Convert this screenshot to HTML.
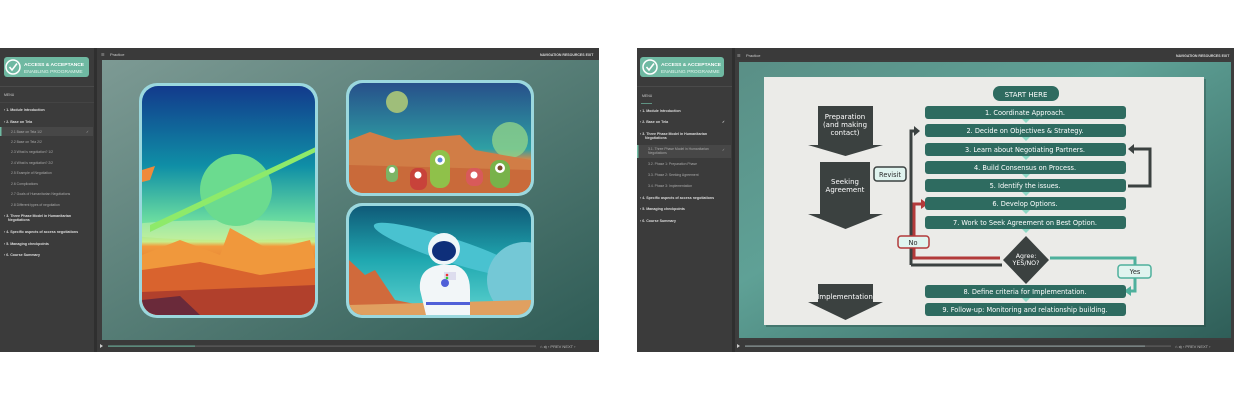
<!DOCTYPE html>
<html><head><meta charset="utf-8"><style>
html,body{margin:0;padding:0;background:#fff;width:1234px;height:400px;overflow:hidden}
svg{display:block}
text{font-family:"Liberation Sans",sans-serif}
.dj{font-family:"DejaVu Sans",sans-serif}
</style></head><body>
<svg width="1234" height="400" viewBox="0 0 1234 400" xmlns="http://www.w3.org/2000/svg">
<defs>
<linearGradient id="lbg" x1="0" y1="0" x2="1" y2="1"><stop offset="0" stop-color="#7d9a94"/><stop offset="0.5" stop-color="#557c75"/><stop offset="1" stop-color="#2f5c56"/></linearGradient>
<linearGradient id="rbg" x1="0" y1="0" x2="1" y2="1"><stop offset="0" stop-color="#5a8f86"/><stop offset="0.4" stop-color="#5fa196"/><stop offset="1" stop-color="#2f5e58"/></linearGradient>
<linearGradient id="sky1" x1="0" y1="0" x2="0" y2="1"><stop offset="0" stop-color="#123a8c"/><stop offset="0.35" stop-color="#0f8fa6"/><stop offset="0.6" stop-color="#6fe0a0"/><stop offset="0.68" stop-color="#c9ee8a"/><stop offset="0.7" stop-color="#f29a3c"/><stop offset="1" stop-color="#b8402c"/></linearGradient>
<linearGradient id="sky2" x1="0" y1="0" x2="0" y2="1"><stop offset="0" stop-color="#27508a"/><stop offset="0.6" stop-color="#2ea0a4"/><stop offset="0.7" stop-color="#d88a4a"/><stop offset="1" stop-color="#c26a3a"/></linearGradient>
<linearGradient id="sky3" x1="0" y1="0" x2="0" y2="1"><stop offset="0" stop-color="#0f5a78"/><stop offset="0.5" stop-color="#20a8b0"/><stop offset="1" stop-color="#5dd2cf"/></linearGradient>
<clipPath id="c1"><rect x="142" y="86" width="173" height="229" rx="16"/></clipPath>
<clipPath id="c2"><rect x="349" y="83" width="182" height="110" rx="14"/></clipPath>
<clipPath id="c3"><rect x="349" y="206" width="182" height="109" rx="14"/></clipPath>
</defs>

<!-- LEFT PANEL -->
<rect x="0" y="48" width="599" height="304" fill="#3d3d3d"/>
<rect x="0" y="48" width="94" height="304" fill="#3b3b3b"/>
<rect x="94" y="48" width="3" height="304" fill="#2f2f2f"/>
<rect x="97" y="48" width="502" height="12" fill="#3a3a3a"/>
<rect x="102" y="60" width="497" height="280" fill="url(#lbg)"/>
<rect x="97" y="340" width="502" height="12" fill="#3a3a3a"/>
<text x="101" y="56" font-size="4" fill="#bbb">☰</text><text x="110" y="56" font-size="4" fill="#ccc">Practice</text>
<text x="540" y="56" font-size="3.5" fill="#ddd" font-weight="bold">NAVIGATION   RESOURCES   EXIT</text>
<rect x="4" y="57" width="85" height="20" rx="3" fill="#6fb9a2"/>
<circle cx="13" cy="67" r="7" fill="none" stroke="#fff" stroke-width="1.5"/>
<path d="M9.5 67 L12 70 L17 63.5" fill="none" stroke="#fff" stroke-width="1.6"/>
<text x="24" y="66" font-size="4.9" font-weight="bold" fill="#fff">ACCESS &amp; ACCEPTANCE</text>
<text x="24" y="73" font-size="4.9" fill="#e6f5ee">ENABLING PROGRAMME</text>
<rect x="0" y="86" width="94" height="1" fill="#4a4a4a"/>
<text x="4" y="96" font-size="3.5" fill="#ccc">MENU</text>
<rect x="0" y="102" width="94" height="0.6" fill="#4a4a4a"/>
<g font-size="3.6" fill="#ddd" font-weight="bold">
<text x="4" y="111">›  1. Module Introduction</text>
<text x="4" y="123">›  2. Base on Tela</text>
<text x="4" y="217">›  3. Three Phase Model in Humanitarian</text><text x="8" y="221">Negotiations</text>
<text x="4" y="233">›  4. Specific aspects of access negotiations</text>
<text x="4" y="245">›  5. Managing checkpoints</text>
<text x="4" y="256">›  6. Course Summary</text>
</g>
<rect x="0" y="127" width="93" height="9" fill="#474747"/><rect x="0" y="127" width="1.5" height="9" fill="#6fb9a2"/>
<g font-size="3.4" fill="#aaa">
<text x="11" y="133">2.1 Base on Tela 1/2</text><text x="86" y="133">✓</text>
<text x="11" y="143">2.2 Base on Tela 2/2</text>
<text x="11" y="153">2.3 What is negotiation? 1/2</text>
<text x="11" y="164">2.4 What is negotiation? 2/2</text>
<text x="11" y="174">2.5 Example of Negotiation</text>
<text x="11" y="185">2.6 Complications</text>
<text x="11" y="195">2.7 Goals of Humanitarian Negotiations</text>
<text x="11" y="206">2.8 Different types of negotiation</text>
</g>
<path d="M100 344 L103 346 L100 348Z" fill="#ccc"/>
<rect x="108" y="345.6" width="428" height="1" fill="#666"/>
<rect x="108" y="345.6" width="87" height="1" fill="#6fb9a2"/>
<text x="540" y="348" font-size="4" fill="#bbb">⌂   ◂)   ‹ PREV    NEXT ›</text>

<rect x="139" y="83" width="179" height="235" rx="18" fill="#9bd8de"/>
<g clip-path="url(#c1)">
<rect x="142" y="86" width="173" height="229" fill="url(#sky1)"/>
<ellipse cx="230" cy="230" rx="120" ry="10" fill="#bff0a8" opacity="0.6"/>
<circle cx="236" cy="190" r="36" fill="#52d09a"/><circle cx="236" cy="190" r="36" fill="#9cf07a" opacity="0.35"/>
<path d="M150 225 L320 145 L320 150 L150 232Z" fill="#8eea6a"/>
<path d="M142 255 L180 240 L220 255 L230 228 L270 250 L310 240 L315 260 L315 315 L142 315Z" fill="#f0983c"/>
<path d="M142 270 L200 262 L260 275 L315 268 L315 315 L142 315Z" fill="#d9632e"/>
<path d="M142 292 L315 285 L315 315 L142 315Z" fill="#b1402c"/>
<path d="M142 300 L180 296 L200 315 L142 315Z" fill="#6a2a3a"/>
<path d="M142 170 L155 166 L150 180 L142 182Z" fill="#f08a3a"/>
</g>
<rect x="346" y="80" width="188" height="116" rx="16" fill="#9bd8de"/>
<g clip-path="url(#c2)">
<rect x="349" y="83" width="182" height="110" fill="url(#sky2)"/>
<circle cx="397" cy="102" r="11" fill="#9fbe7a"/>
<circle cx="510" cy="140" r="18" fill="#8ed28a" opacity="0.8"/>
<path d="M349 140 L370 132 L395 140 L460 135 L475 150 L531 160 L531 193 L349 193Z" fill="#d17d46"/>
<path d="M349 165 L531 170 L531 193 L349 193Z" fill="#c96a3a"/>
<rect x="386" y="165" width="12" height="17" rx="5" fill="#7cb465"/><circle cx="392" cy="170" r="3" fill="#fff"/>
<rect x="410" y="168" width="17" height="22" rx="7" fill="#c8423a"/><circle cx="418" cy="175" r="3.5" fill="#fff"/>
<rect x="430" y="150" width="20" height="38" rx="9" fill="#8fc14a"/><circle cx="440" cy="160" r="5" fill="#fff"/><circle cx="440" cy="160" r="2.5" fill="#5b8ad8"/>
<rect x="466" y="168" width="17" height="18" rx="7" fill="#d85a5a"/><circle cx="474" cy="175" r="3.5" fill="#fff"/>
<rect x="490" y="160" width="20" height="28" rx="9" fill="#78b24a"/><circle cx="500" cy="168" r="5" fill="#fff"/><circle cx="500" cy="168" r="2.5" fill="#7a4a2a"/>
</g>
<rect x="346" y="203" width="188" height="115" rx="16" fill="#9bd8de"/>
<g clip-path="url(#c3)">
<rect x="349" y="206" width="182" height="109" fill="url(#sky3)"/>
<ellipse cx="450" cy="250" rx="80" ry="12" fill="#49c2d0" transform="rotate(18 450 250)"/>
<circle cx="525" cy="280" r="38" fill="#74c8d6"/>
<path d="M349 260 L365 275 L375 270 L395 300 L420 305 L420 315 L349 315Z" fill="#d06a3c"/>
<path d="M349 305 L531 300 L531 315 L349 315Z" fill="#e0a060"/>
<circle cx="444" cy="249" r="16" fill="#eef6f8"/><ellipse cx="444" cy="251" rx="12" ry="10" fill="#0e2f7a"/>
<path d="M420 290 Q418 268 440 265 L455 265 Q470 270 470 290 L470 315 L426 315Z" fill="#f2f6f8"/>
<rect x="426" y="302" width="44" height="3" fill="#5060d8"/>
<rect x="444" y="272" width="12" height="8" fill="#dde"/><circle cx="447" cy="275" r="1.3" fill="#e33"/><circle cx="447" cy="278" r="1.3" fill="#3c3"/>
<circle cx="445" cy="283" r="4" fill="#5060d8"/>
</g>

<!-- RIGHT PANEL -->
<rect x="637" y="48" width="597" height="304" fill="#3d3d3d"/>
<rect x="637" y="48" width="95" height="304" fill="#3b3b3b"/>
<rect x="732" y="48" width="3" height="304" fill="#2f2f2f"/>
<rect x="735" y="48" width="499" height="12" fill="#3a3a3a"/>
<rect x="739" y="62" width="492" height="276" fill="url(#rbg)"/>
<rect x="735" y="340" width="499" height="12" fill="#3a3a3a"/>
<text x="737" y="57" font-size="4" fill="#bbb">☰</text><text x="746" y="57" font-size="4" fill="#ccc">Practice</text>
<text x="1176" y="57" font-size="3.5" fill="#ddd" font-weight="bold">NAVIGATION  RESOURCES  EXIT</text>
<rect x="640" y="57" width="84" height="20" rx="3" fill="#6fb9a2"/>
<circle cx="650" cy="67" r="7" fill="none" stroke="#fff" stroke-width="1.5"/>
<path d="M646.5 67 L649 70 L654 63.5" fill="none" stroke="#fff" stroke-width="1.6"/>
<text x="661" y="66" font-size="4.9" font-weight="bold" fill="#fff">ACCESS &amp; ACCEPTANCE</text>
<text x="661" y="73" font-size="4.9" fill="#e6f5ee">ENABLING PROGRAMME</text>
<rect x="637" y="86" width="95" height="1" fill="#4a4a4a"/>
<text x="642" y="97" font-size="3.5" fill="#ccc">MENU</text>
<rect x="641" y="103" width="11" height="0.7" fill="#6fb9a2"/>
<g font-size="3.6" fill="#ddd" font-weight="bold">
<text x="640" y="112">›  1. Module Introduction</text>
<text x="640" y="123">›  2. Base on Tela</text><text x="722" y="123">✓</text>
<text x="640" y="135">›  3. Three Phase Model in Humanitarian</text><text x="645" y="139">Negotiations</text>
<text x="640" y="199">›  4. Specific aspects of access negotiations</text>
<text x="640" y="210">›  5. Managing checkpoints</text>
<text x="640" y="222">›  6. Course Summary</text>
</g>
<rect x="637" y="145" width="94" height="13" fill="#474747"/><rect x="637" y="145" width="1.5" height="13" fill="#6fb9a2"/>
<g font-size="3.4" fill="#aaa">
<text x="648" y="150">3.1. Three Phase Model in Humanitarian</text><text x="648" y="154">Negotiations</text><text x="722" y="151">✓</text>
<text x="648" y="165">3.2. Phase 1: Preparation Phase</text>
<text x="648" y="176">3.3. Phase 2: Seeking Agreement</text>
<text x="648" y="187">3.4. Phase 3: Implementation</text>
</g>
<path d="M737 344 L740 346 L737 348Z" fill="#ccc"/>
<rect x="745" y="345.6" width="426" height="1" fill="#666"/>
<rect x="745" y="345.6" width="400" height="1" fill="#9aa"/>
<text x="1175" y="348" font-size="4" fill="#bbb">⌂   ◂)   ‹ PREV    NEXT ›</text>

<rect x="766" y="79" width="440" height="248" fill="#2a4a46" opacity="0.4"/>
<rect x="764" y="77" width="440" height="248" fill="#ebebe8"/>
<g fill="#3b4140">
<path d="M818 106 H873 V145 H883 L845.5 156 L808 145 H818Z"/>
<path d="M820 162 H870 V214 H883 L845.5 229 L808 214 H820Z"/>
<path d="M818 284 H873 V302 H883 L845.5 320 L808 302 H818Z"/>
</g>
<g class="dj" font-size="7" fill="#fff" text-anchor="middle">
<text class="dj" x="845" y="119">Preparation</text><text class="dj" x="845" y="127">(and making</text><text class="dj" x="845" y="135">contact)</text>
<text class="dj" x="845" y="184">Seeking</text><text class="dj" x="845" y="192">Agreement</text>
<text class="dj" x="845" y="299">Implementation</text>
</g>
<path d="M911 265 V131 H914" fill="none" stroke="#3b4140" stroke-width="3"/>
<path d="M911 265 H1002" fill="none" stroke="#3b4140" stroke-width="3"/>
<path d="M914 126 L920 131 L914 136Z" fill="#3b4140"/>
<path d="M1128 186 H1150 V149 H1133" fill="none" stroke="#3b4140" stroke-width="3"/>
<path d="M1134 144 L1128 149 L1134 154Z" fill="#3b4140"/>
<path d="M1000 258 H914 V204 H922" fill="none" stroke="#b23a3a" stroke-width="3"/>
<path d="M921 199 L928 204 L921 209Z" fill="#b23a3a"/>
<path d="M1050 258 H1135 V291 H1130" fill="none" stroke="#4eb09c" stroke-width="3"/>
<path d="M1131 286 L1124 291 L1131 296Z" fill="#4eb09c"/>
<rect x="993" y="86" width="66" height="15" rx="7" fill="#2e6b60"/>
<text class="dj" x="1026" y="97" text-anchor="middle" font-size="7" fill="#fff">START HERE</text>
<g fill="#2e6b60">
<rect x="925" y="106" width="201" height="13" rx="3"/>
<rect x="925" y="124" width="201" height="13" rx="3"/>
<rect x="925" y="143" width="201" height="13" rx="3"/>
<rect x="925" y="161" width="201" height="13" rx="3"/>
<rect x="925" y="179" width="201" height="13" rx="3"/>
<rect x="925" y="197" width="201" height="13" rx="3"/>
<rect x="925" y="216" width="201" height="13" rx="3"/>
<rect x="925" y="285" width="201" height="13" rx="3"/>
<rect x="925" y="303" width="201" height="13" rx="3"/>
</g>
<g fill="#8fd9c6">
<path d="M1022 119 h8 l-4 4z"/><path d="M1022 137 h8 l-4 4z"/><path d="M1022 156 h8 l-4 4z"/><path d="M1022 174 h8 l-4 4z"/><path d="M1022 192 h8 l-4 4z"/><path d="M1022 210 h8 l-4 4z"/><path d="M1022 229 h8 l-4 4z"/><path d="M1022 298 h8 l-4 4z"/>
</g>
<g font-size="6.6" fill="#fff" text-anchor="middle">
<text class="dj" x="1025" y="115">1. Coordinate Approach.</text>
<text class="dj" x="1025" y="133">2. Decide on Objectives &amp; Strategy.</text>
<text class="dj" x="1025" y="152">3. Learn about Negotiating Partners.</text>
<text class="dj" x="1025" y="170">4. Build Consensus on Process.</text>
<text class="dj" x="1025" y="188">5. Identify the issues.</text>
<text class="dj" x="1025" y="206">6. Develop Options.</text>
<text class="dj" x="1025" y="225">7. Work to Seek Agreement on Best Option.</text>
<text class="dj" x="1025" y="294">8. Define criteria for Implementation.</text>
<text class="dj" x="1025" y="312">9. Follow-up: Monitoring and relationship building.</text>
</g>
<path d="M1026 236 L1049 260 L1026 284 L1003 260Z" fill="#3b4140"/>
<text class="dj" x="1026" y="258" text-anchor="middle" font-size="6.3" fill="#fff">Agree:</text>
<text class="dj" x="1026" y="265" text-anchor="middle" font-size="6.3" fill="#fff">YES/NO?</text>
<rect x="874" y="167" width="32" height="14" rx="3" fill="#e0f4ef" stroke="#3b4140" stroke-width="1.5"/>
<text class="dj" x="890" y="177" text-anchor="middle" font-size="6.6" fill="#2a2a2a">Revisit</text>
<rect x="898" y="236" width="31" height="12" rx="3" fill="#e0f4ef" stroke="#b23a3a" stroke-width="1.5"/>
<text class="dj" x="913" y="245" text-anchor="middle" font-size="6.6" fill="#2a2a2a">No</text>
<rect x="1118" y="265" width="33" height="13" rx="3" fill="#e0f4ef" stroke="#4eb09c" stroke-width="1.5"/>
<text class="dj" x="1135" y="274" text-anchor="middle" font-size="6.6" fill="#2a2a2a">Yes</text>
</svg>
</body></html>
